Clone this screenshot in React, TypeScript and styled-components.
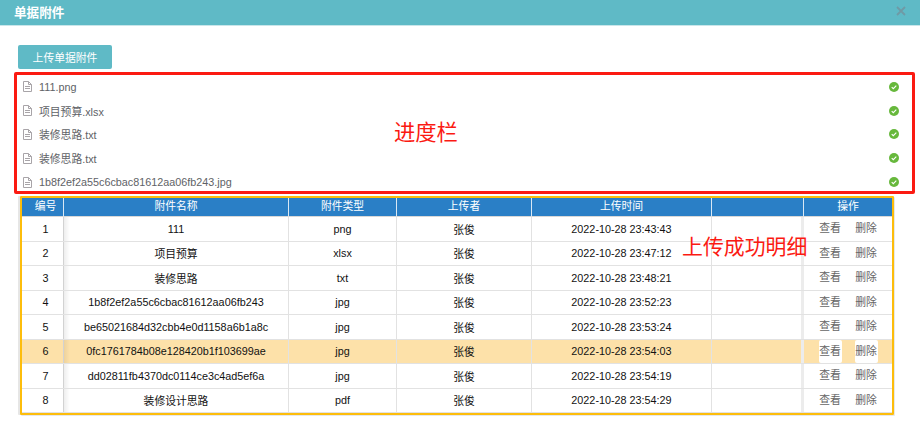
import React from 'react'
import styled, { createGlobalStyle } from 'styled-components'

const GlobalStyle = createGlobalStyle`
	html, body {
		margin: 0;
		padding: 0;
		background: #fff;
		font-family: 'Liberation Sans', 'Noto Sans CJK SC', sans-serif;
		font-size: 10.8px;
	}
`

const Page = styled.div`
	width: 920px;
	height: 434px;
	overflow: hidden;
`

const TitleBar = styled.div`
	display: flex;
	align-items: center;
	justify-content: space-between;
	height: 26px;
	padding: 0 14px 3px 14px;
	box-sizing: border-box;
	background: #5fbac6;
	border-bottom: 1px solid #c9e6ea;
	color: #fff;
	font-size: 12.6px;
	font-weight: bold;
`

const CloseIcon = styled.svg`
	width: 10px;
	height: 10px;
	stroke: #6f9aa5;
	stroke-width: 1.8;
`

const Body = styled.div`
	padding: 19px 5px 0 14px;
	display: flex;
	flex-direction: column;
`

const UploadButton = styled.button`
	align-self: flex-start;
	margin-left: 4px;
	width: 94px;
	height: 24px;
	padding: 0;
	border: none;
	border-radius: 2px;
	background: #5fbac6;
	color: #fff;
	font-family: inherit;
	font-size: 10.8px;
`

const ProgressFrame = styled.div`
	position: relative;
	margin-top: 3px;
	height: 122px;
	box-sizing: border-box;
	border: 3px solid #fb1a12;
	border-radius: 2px;
`

const FileRow = styled.div`
	display: flex;
	align-items: center;
	height: 23.8px;
	padding: 0 13px 0 6px;
	color: #606266;
	font-size: 10.8px;
`

const FileIcon = styled.svg`
	flex: none;
	width: 9px;
	height: 11px;
	margin-right: 7px;
	fill: none;
	stroke: #a8a4a8;
	stroke-width: 1;
`

const FileName = styled.span`
	flex: 1;
`

const DoneIcon = styled.svg`
	flex: none;
	width: 10px;
	height: 10px;
`

const Note = styled.span`
	position: absolute;
	color: #fb1a12;
	line-height: 24px;
	white-space: nowrap;
`

const ProgressNote = styled(Note)`
	left: 377px;
	top: 46px;
	font-size: 21.3px;
`

const DetailNote = styled(Note)`
	left: 660px;
	top: 37px;
	font-size: 20.9px;
`

const DetailFrame = styled.div`
	position: relative;
	margin: 2px 21px 0 6px;
	height: 219px;
	box-sizing: border-box;
	border: 2px solid #fdbd0b;
	border-radius: 1px;
	box-shadow: -2px 0 0 #e6e6e6, 1px 1px 0 #e8e8e8;
`

const Table = styled.table`
	width: 870px;
	height: 215px;
	table-layout: fixed;
	border-collapse: separate;
	border-spacing: 0;
	font-size: 10.8px;
`

const Col = styled.col<{ $w: number }>`
	width: ${p => p.$w}px;
`

const HeadRow = styled.tr`
	height: 19px;
`

const Th = styled.th`
	padding: 0 0 3px;
	box-sizing: border-box;
	background: #2a7fc6;
	border-right: 1px solid #d9e8f4;
	border-bottom: 1px solid #d8d8d8;
	color: #fff;
	font-weight: normal;
	line-height: 14px;
	&:first-child {
		padding-left: 6px;
	}
	&:last-child {
		border-right: none;
	}
`

const Tr = styled.tr<{ $active?: boolean }>`
	background: ${p => (p.$active ? '#fde1a9' : '#fff')};
`

const Td = styled.td`
	padding: 0;
	text-align: center;
	color: #111;
	white-space: nowrap;
	border-right: 1px solid #e2e2e2;
	border-bottom: 1px solid #e2e2e2;
	box-sizing: border-box;
	&:last-child {
		border-right: none;
	}
`

const FirstTd = styled(Td)`
	position: relative;
	padding-left: 6px;
	&::after {
		content: '';
		position: absolute;
		top: 0;
		bottom: 0;
		left: 100%;
		width: 7px;
		background: linear-gradient(to right, rgb(0 0 0 / 8%), rgb(0 0 0 / 0%));
	}
`

const OpsTd = styled(Td)`
	position: relative;
	&::before {
		content: '';
		position: absolute;
		top: 0;
		bottom: 0;
		right: 100%;
		width: 3px;
		background: #ececec;
	}
`

const OpsGroup = styled.div`
	display: flex;
	justify-content: center;
	gap: 13px;
`

const OpLink = styled.a<{ $active?: boolean }>`
	display: block;
	width: 23px;
	height: 23px;
	line-height: 23px;
	border-radius: 2px;
	color: #666;
	background: ${p => (p.$active ? '#fff' : 'transparent')};
`

const files = [
	'111.png',
	'项目预算.xlsx',
	'装修思路.txt',
	'装修思路.txt',
	'1b8f2ef2a55c6cbac81612aa06fb243.jpg',
]

const columns = [
	{ title: '编号', width: 42 },
	{ title: '附件名称', width: 225 },
	{ title: '附件类型', width: 108 },
	{ title: '上传者', width: 135 },
	{ title: '上传时间', width: 180 },
	{ title: '', width: 92 },
	{ title: '操作', width: 88 },
]

const rows = [
	{ name: '111', type: 'png', time: '2022-10-28 23:43:43' },
	{ name: '项目预算', type: 'xlsx', time: '2022-10-28 23:47:12' },
	{ name: '装修思路', type: 'txt', time: '2022-10-28 23:48:21' },
	{ name: '1b8f2ef2a55c6cbac81612aa06fb243', type: 'jpg', time: '2022-10-28 23:52:23' },
	{ name: 'be65021684d32cbb4e0d1158a6b1a8c', type: 'jpg', time: '2022-10-28 23:53:24' },
	{ name: '0fc1761784b08e128420b1f103699ae', type: 'jpg', time: '2022-10-28 23:54:03' },
	{ name: 'dd02811fb4370dc0114ce3c4ad5ef6a', type: 'jpg', time: '2022-10-28 23:54:19' },
	{ name: '装修设计思路', type: 'pdf', time: '2022-10-28 23:54:29' },
]

const ACTIVE_ROW = 5

const App = () => (
	<Page>
		<GlobalStyle />
		<TitleBar>
			单据附件
			<CloseIcon viewBox='0 0 10 10'>
				<path d='M1 1l8 8M9 1l-8 8' />
			</CloseIcon>
		</TitleBar>
		<Body>
			<UploadButton type='button'>上传单据附件</UploadButton>
			<ProgressFrame>
				{files.map((file, i) => (
					<FileRow key={i}>
						<FileIcon viewBox='0 0 9 11'>
							<path d='M.5.5h5l3 3v7h-8zM5.5.5v3h3M2 5.5h5M2 7.5h5' />
						</FileIcon>
						<FileName>{file}</FileName>
						<DoneIcon viewBox='0 0 10 10'>
							<circle cx='5' cy='5' r='5' fill='#67b83c' />
							<path d='M2.7 5.2l1.6 1.5 3-3' fill='none' stroke='#fff' strokeWidth='1.1' />
						</DoneIcon>
					</FileRow>
				))}
				<ProgressNote>进度栏</ProgressNote>
			</ProgressFrame>
			<DetailFrame>
				<Table>
					<colgroup>
						{columns.map((c, i) => (
							<Col key={i} $w={c.width} />
						))}
					</colgroup>
					<thead>
						<HeadRow>
							{columns.map((c, i) => (
								<Th key={i}>{c.title}</Th>
							))}
						</HeadRow>
					</thead>
					<tbody>
						{rows.map((row, i) => (
							<Tr key={i} $active={i === ACTIVE_ROW}>
								<FirstTd>{i + 1}</FirstTd>
								<Td>{row.name}</Td>
								<Td>{row.type}</Td>
								<Td>张俊</Td>
								<Td>{row.time}</Td>
								<Td />
								<OpsTd>
									<OpsGroup>
										<OpLink $active={i === ACTIVE_ROW}>查看</OpLink>
										<OpLink $active={i === ACTIVE_ROW}>删除</OpLink>
									</OpsGroup>
								</OpsTd>
							</Tr>
						))}
					</tbody>
				</Table>
				<DetailNote>上传成功明细</DetailNote>
			</DetailFrame>
		</Body>
	</Page>
)

export default App
